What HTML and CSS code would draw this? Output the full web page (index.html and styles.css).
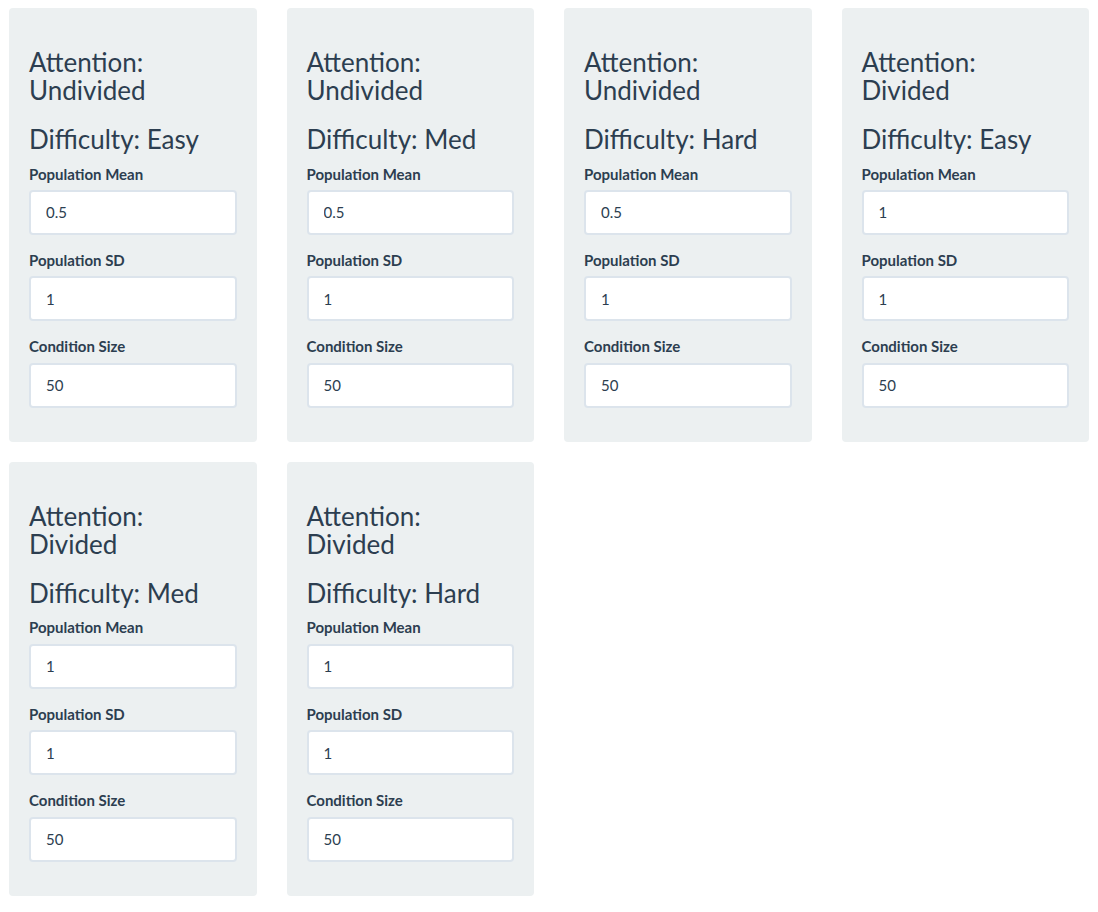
FILE: index.html
```html
<!DOCTYPE html>
<html>
<head>
<meta charset="utf-8">
<link rel="stylesheet" href="styles.css">
</head>
<body>
<div class="grid">
  <div class="well">
    <h3>Attention: Undivided</h3>
    <h3>Difficulty: Easy</h3>
    <div class="form-group"><label>Population Mean</label><input type="number" value="0.5"></div>
    <div class="form-group"><label>Population SD</label><input type="number" value="1"></div>
    <div class="form-group"><label>Condition Size</label><input type="number" value="50"></div>
  </div>
  <div class="well">
    <h3>Attention: Undivided</h3>
    <h3>Difficulty: Med</h3>
    <div class="form-group"><label>Population Mean</label><input type="number" value="0.5"></div>
    <div class="form-group"><label>Population SD</label><input type="number" value="1"></div>
    <div class="form-group"><label>Condition Size</label><input type="number" value="50"></div>
  </div>
  <div class="well">
    <h3>Attention: Undivided</h3>
    <h3>Difficulty: Hard</h3>
    <div class="form-group"><label>Population Mean</label><input type="number" value="0.5"></div>
    <div class="form-group"><label>Population SD</label><input type="number" value="1"></div>
    <div class="form-group"><label>Condition Size</label><input type="number" value="50"></div>
  </div>
  <div class="well">
    <h3>Attention: Divided</h3>
    <h3>Difficulty: Easy</h3>
    <div class="form-group"><label>Population Mean</label><input type="number" value="1"></div>
    <div class="form-group"><label>Population SD</label><input type="number" value="1"></div>
    <div class="form-group"><label>Condition Size</label><input type="number" value="50"></div>
  </div>
  <div class="well">
    <h3>Attention: Divided</h3>
    <h3>Difficulty: Med</h3>
    <div class="form-group"><label>Population Mean</label><input type="number" value="1"></div>
    <div class="form-group"><label>Population SD</label><input type="number" value="1"></div>
    <div class="form-group"><label>Condition Size</label><input type="number" value="50"></div>
  </div>
  <div class="well">
    <h3>Attention: Divided</h3>
    <h3>Difficulty: Hard</h3>
    <div class="form-group"><label>Population Mean</label><input type="number" value="1"></div>
    <div class="form-group"><label>Population SD</label><input type="number" value="1"></div>
    <div class="form-group"><label>Condition Size</label><input type="number" value="50"></div>
  </div>
</div>
</body>
</html>
```
FILE: styles.css
```css
* { box-sizing: border-box; }
html, body {
  margin: 0;
  background: #ffffff;
  font-family: Lato, "Open Sans", sans-serif;
  font-size: 15px;
  line-height: 1.42857;
  color: #2c3e50;
}
.grid {
  display: grid;
  grid-template-columns: repeat(4, 247.5px);
  column-gap: 30px;
  row-gap: 20px;
  padding: 8px 0 0 9px;
  align-items: start;
}
.well {
  background: #ecf0f1;
  border-radius: 4px;
  padding: 19px 20px 19px 20px;
}
h3 {
  font-size: 26px;
  font-weight: 400;
  line-height: 28px;
  margin: 21px 0 10.5px 0;
  padding-right: 40px;
}
h3 + h3 { margin-top: 21px; padding-right: 0; }
.form-group { margin-bottom: 15px; }
label {
  display: inline-block;
  font-weight: 700;
  margin-bottom: 5px;
}
input {
  display: block;
  width: 100%;
  height: 45px;
  padding: 10px 15px;
  font-family: Lato, "Open Sans", sans-serif;
  font-size: 15px;
  color: #2c3e50;
  background: #ffffff;
  border: 2px solid #dce4ec;
  border-radius: 4px;
  -moz-appearance: textfield;
}
input::-webkit-outer-spin-button,
input::-webkit-inner-spin-button { -webkit-appearance: none; margin: 0; }
```
